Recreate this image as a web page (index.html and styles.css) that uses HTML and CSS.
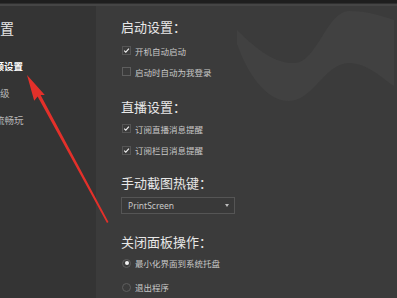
FILE: index.html
```html
<!DOCTYPE html>
<html lang="zh-CN">
<head>
<meta charset="utf-8">
<link rel="stylesheet" href="styles.css">
</head>
<body>
<div class="topbar"></div>
<div class="app">
  <aside class="sidebar">
    <div class="side-title">设置</div>
    <ul class="side-list">
      <li class="side-item active cut-a">视频设置</li>
      <li class="side-item cut-b">等级</li>
      <li class="side-item cut-c">流畅玩</li>
    </ul>
  </aside>
  <main class="panel">
    <svg class="wave" width="160" height="110" viewBox="240 0 160 110">
      <path d="M240,30 C262,52 280,64 298,63 C320,62 330,11 352,11 C370,11 386,16 397,20 L397,86 C385,78 370,63 352,63 C328,63 316,101 292,101 C268,101 250,72 240,44 Z" fill="#414141"/>
    </svg>
    <section class="group g1">
      <h2 class="heading">启动设置：</h2>
      <label class="row"><span class="box checked"><svg width="9" height="9" viewBox="0 0 9 9"><path d="M1.5 4.6 L3.6 6.6 L7.6 2.2" fill="none" stroke="#f2f2f2" stroke-width="1.4"/></svg></span>开机自动启动</label>
      <label class="row"><span class="box"></span>启动时自动为我登录</label>
    </section>
    <section class="group g2">
      <h2 class="heading">直播设置：</h2>
      <label class="row"><span class="box checked"><svg width="9" height="9" viewBox="0 0 9 9"><path d="M1.5 4.6 L3.6 6.6 L7.6 2.2" fill="none" stroke="#f2f2f2" stroke-width="1.4"/></svg></span>订阅直播消息提醒</label>
      <label class="row"><span class="box checked"><svg width="9" height="9" viewBox="0 0 9 9"><path d="M1.5 4.6 L3.6 6.6 L7.6 2.2" fill="none" stroke="#f2f2f2" stroke-width="1.4"/></svg></span>订阅栏目消息提醒</label>
    </section>
    <section class="group g3">
      <h2 class="heading">手动截图热键：</h2>
      <div class="select"><span>PrintScreen</span><span class="caret"></span></div>
    </section>
    <section class="group g4">
      <h2 class="heading">关闭面板操作：</h2>
      <label class="row radio-row"><span class="radio on"></span>最小化界面到系统托盘</label>
      <label class="row radio-row"><span class="radio"></span>退出程序</label>
    </section>
  </main>
</div>
<svg class="arrow" width="397" height="298" viewBox="0 0 397 298">
  <path d="M108.5,222 L107,223 L37.6,96.6 L34.2,100.7 L27,75 L44.8,94.9 L40.6,95 Z" fill="#e3302a"/>
</svg>
</body>
</html>
```
FILE: styles.css
```css
* { box-sizing: border-box; margin: 0; padding: 0; }
html, body { width: 397px; height: 298px; overflow: hidden; }
body {
  position: relative;
  background: #3b3b3b;
  font-family: "Noto Sans CJK SC", "Noto Sans", sans-serif;
  color: #cfcfcf;
}
.topbar {
  height: 6px;
  background: linear-gradient(#1e1e1e 0, #1e1e1e 3px, #2f2f2f 3px, #2f2f2f 4px, #454545 4px, #454545 6px);
}
.app { display: flex; height: 292px; }
.sidebar {
  width: 96px;
  background: #343434;
  overflow: hidden;
  padding-top: 13px;
}
.side-title {
  font-size: 14px;
  line-height: 18px;
  color: #e6e6e6;
  margin-left: -14px;
  white-space: nowrap;
}
.side-list { list-style: none; margin-top: 16px; }
.side-item {
  font-size: 9.5px;
  line-height: 27px;
  color: #b8b8b8;
  white-space: nowrap;
}
.side-item.active { color: #ffffff; font-weight: bold; }
.cut-a { margin-left: -15px; }
.cut-b { margin-left: -9.5px; }
.cut-c { margin-left: -5px; }
.panel {
  position: relative;
  flex: 1;
  padding-left: 25px;
  padding-top: 13px;
}
.wave { position: absolute; right: 0; top: -6px; }
.group { position: relative; }
.heading {
  font-size: 13px;
  font-weight: normal;
  line-height: 16px;
  color: #e8e8e8;
  height: 16px;
}
.row {
  display: flex;
  align-items: center;
  height: 21px;
  font-size: 8.5px;
  color: #c8c8c8;
  white-space: nowrap;
}
.g1 .heading { margin-bottom: 5px; }
.g2 { margin-top: 17px; }
.g2 .heading { margin-bottom: 3px; }
.g2 .row { height: 21.5px; }
.g3 { margin-top: 14px; }
.g4 { margin-top: 20px; }
.g4 .heading { margin-bottom: 1px; }
.radio-row { height: 24px; }
.box {
  width: 9px;
  height: 9px;
  border: 1px solid #5e5e5e;
  margin-left: 1px;
  margin-right: 4px;
  display: flex;
  align-items: center;
  justify-content: center;
  flex: none;
}
.box.checked { border-color: #555; }
.box svg { display: block; }
.radio {
  width: 9px;
  height: 9px;
  border: 1px solid #5e5e5e;
  border-radius: 50%;
  margin-left: 1px;
  margin-right: 4px;
  flex: none;
  display: flex;
  align-items: center;
  justify-content: center;
}
.radio.on::after {
  content: "";
  width: 4px;
  height: 4px;
  border-radius: 50%;
  background: #f2f2f2;
}
.select {
  margin-top: 6px;
  width: 114px;
  height: 17px;
  border: 1px solid #555555;
  background: #393939;
  display: flex;
  align-items: center;
  justify-content: space-between;
  padding: 0 5px 0 6px;
  font-family: "Noto Sans", "Liberation Sans", sans-serif;
  font-size: 8.5px;
  color: #c8c8c8;
}
.caret {
  width: 0;
  height: 0;
  border-left: 2.5px solid transparent;
  border-right: 2.5px solid transparent;
  border-top: 3px solid #bdbdbd;
}
.arrow { position: absolute; left: 0; top: 0; pointer-events: none; }
```
